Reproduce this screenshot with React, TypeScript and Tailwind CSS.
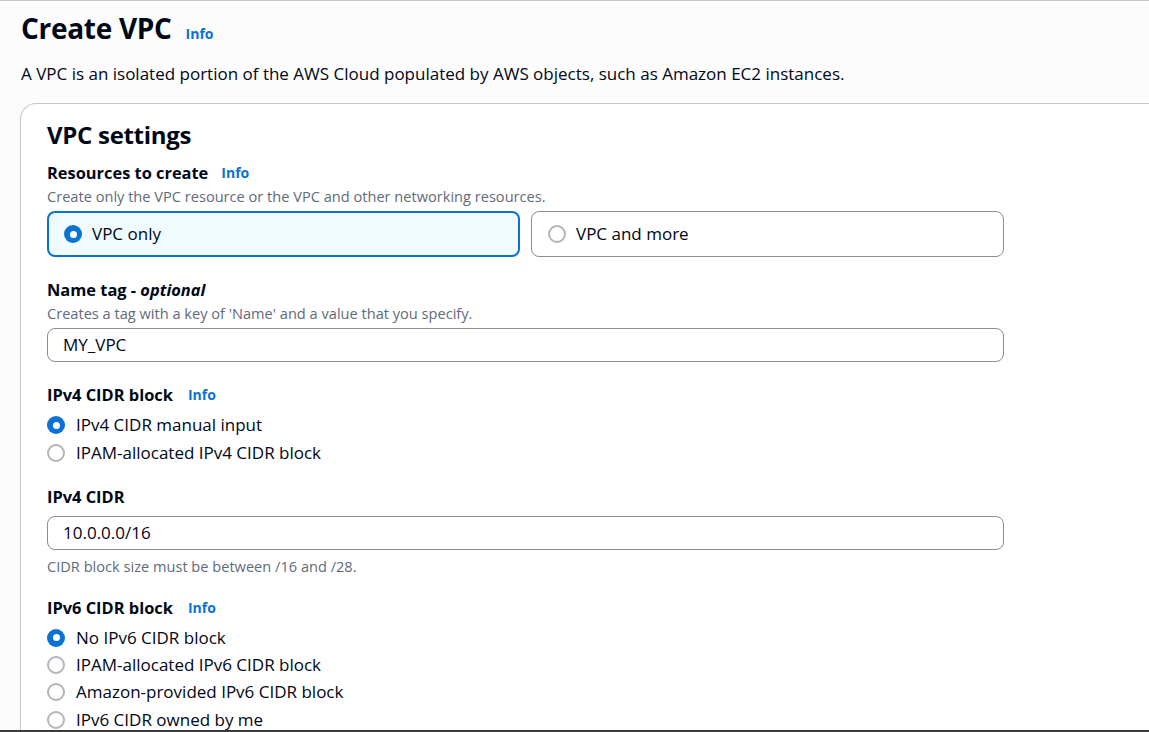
import React from 'react';

const font = { fontFamily: '"Open Sans", "Noto Sans", Arial, sans-serif' };

function Info() {
  return <span className="text-[14px] font-bold text-[#0972d3] leading-[20px]">Info</span>;
}

function Radio({ checked }: { checked?: boolean }) {
  if (checked) {
    return (
      <span className="w-[18px] h-[18px] rounded-full bg-[#0972d3] flex items-center justify-center shrink-0">
        <span className="w-[7px] h-[7px] rounded-full bg-white" />
      </span>
    );
  }
  return <span className="w-[18px] h-[18px] rounded-full border-2 border-[#b4b4bb] bg-white shrink-0" />;
}

function RadioRow({ label, checked, h }: { label: string; checked?: boolean; h: string }) {
  return (
    <div className={`flex items-center gap-[11px] ${h}`}>
      <Radio checked={checked} />
      <span className="text-[17px] text-[#000716] leading-[22px]">{label}</span>
    </div>
  );
}

function Label({ children, gap = 'gap-[14px]' }: { children: React.ReactNode; gap?: string }) {
  return (
    <div className={`flex items-center ${gap} h-[22px] text-[16.4px] font-bold text-[#000716] leading-[22px]`}>
      {children}
    </div>
  );
}

function Desc({ children }: { children: React.ReactNode }) {
  return <div className="text-[14.6px] text-[#5f6b7a] leading-[20px]">{children}</div>;
}

function Input({ value }: { value: string }) {
  return (
    <div className="h-[34px] rounded-[8px] border border-[#8c8c94] bg-white flex items-center px-[15px] text-[17px] text-[#000716]">
      {value}
    </div>
  );
}

export default function App() {
  return (
    <div style={font} className="h-[732px] overflow-hidden bg-[#fcfcfc] border-t border-[#c6c6cd] border-b-2 border-b-[#3b3b3b] text-[#000716]">
      <div className="pl-[21px] pt-[9px]">
        <div className="flex items-baseline gap-[14px]">
          <h1 className="text-[28px] font-bold leading-[36px] tracking-[-0.3px]">Create VPC</h1>
          <Info />
        </div>
        <p className="mt-[16px] text-[17px] leading-[24px]">
          A VPC is an isolated portion of the AWS Cloud populated by AWS objects, such as Amazon EC2 instances.
        </p>
      </div>

      <div className="ml-[20px] mt-[17px] bg-white border-l border-t border-[#c6c6cd] rounded-tl-[16px] pl-[26px] pt-[16px] pb-10">
        <div className="w-[957px]">
          <h2 className="text-[24px] font-bold leading-[30px] tracking-[-0.3px]">VPC settings</h2>

          <div className="mt-[12px]">
            <Label gap="gap-[13px]">
              <span>Resources to create</span>
              <Info />
            </Label>
            <div className="mt-[2px]">
              <Desc>Create only the VPC resource or the VPC and other networking resources.</Desc>
            </div>
            <div className="mt-[5px] grid grid-cols-2 gap-[11px]">
              <div className="h-[46px] rounded-[8px] border-2 border-[#0972d3] bg-[#f0fbff] flex items-center gap-[10px] pl-[15px]">
                <Radio checked />
                <span className="text-[17px] leading-[22px]">VPC only</span>
              </div>
              <div className="h-[46px] rounded-[8px] border border-[#8c8c94] bg-white flex items-center gap-[10px] pl-[16px]">
                <Radio />
                <span className="text-[17px] leading-[22px]">VPC and more</span>
              </div>
            </div>
          </div>

          <div className="mt-[22px]">
            <Label>
              <span>
                Name tag - <i>optional</i>
              </span>
            </Label>
            <div className="mt-[2px]">
              <Desc>Creates a tag with a key of 'Name' and a value that you specify.</Desc>
            </div>
            <div className="mt-[5px]">
              <Input value="MY_VPC" />
            </div>
          </div>

          <div className="mt-[22px]">
            <Label gap="gap-[15px]">
              <span>IPv4 CIDR block</span>
              <Info />
            </Label>
            <div className="mt-[5px]">
              <RadioRow checked label="IPv4 CIDR manual input" h="h-[28px]" />
              <RadioRow label="IPAM-allocated IPv4 CIDR block" h="h-[28px]" />
            </div>
          </div>

          <div className="mt-[19px]">
            <Label>IPv4 CIDR</Label>
            <div className="mt-[8px]">
              <Input value="10.0.0.0/16" />
            </div>
            <div className="mt-[6px]">
              <Desc>CIDR block size must be between /16 and /28.</Desc>
            </div>
          </div>

          <div className="mt-[21px]">
            <Label gap="gap-[15px]">
              <span>IPv6 CIDR block</span>
              <Info />
            </Label>
            <div className="mt-[5px]">
              <RadioRow checked label="No IPv6 CIDR block" h="h-[27px]" />
              <RadioRow label="IPAM-allocated IPv6 CIDR block" h="h-[27px]" />
              <RadioRow label="Amazon-provided IPv6 CIDR block" h="h-[28px]" />
              <RadioRow label="IPv6 CIDR owned by me" h="h-[27px]" />
            </div>
          </div>
        </div>
      </div>
    </div>
  );
}
